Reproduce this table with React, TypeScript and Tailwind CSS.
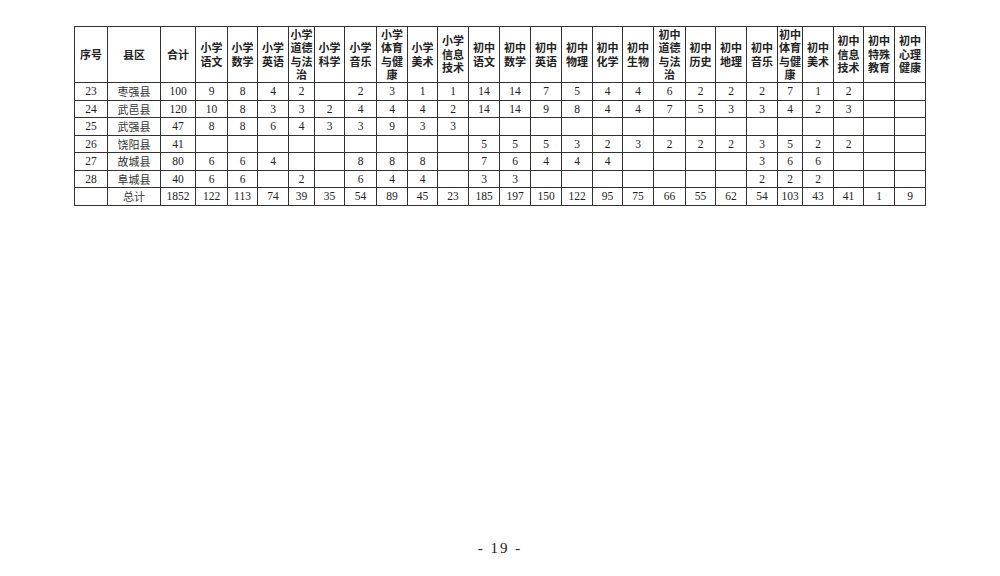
import React from 'react';

const widths = [33, 53, 35, 32, 30, 31, 26, 30, 32, 31, 30, 31, 31, 31, 31, 31, 30, 31, 32, 30, 31, 31, 25, 31, 30, 31, 31];

const headers: string[][] = [
  ['序号'],
  ['县区'],
  ['合计'],
  ['小学', '语文'],
  ['小学', '数学'],
  ['小学', '英语'],
  ['小学', '道德', '与法', '治'],
  ['小学', '科学'],
  ['小学', '音乐'],
  ['小学', '体育', '与健', '康'],
  ['小学', '美术'],
  ['小学', '信息', '技术'],
  ['初中', '语文'],
  ['初中', '数学'],
  ['初中', '英语'],
  ['初中', '物理'],
  ['初中', '化学'],
  ['初中', '生物'],
  ['初中', '道德', '与法', '治'],
  ['初中', '历史'],
  ['初中', '地理'],
  ['初中', '音乐'],
  ['初中', '体育', '与健', '康'],
  ['初中', '美术'],
  ['初中', '信息', '技术'],
  ['初中', '特殊', '教育'],
  ['初中', '心理', '健康'],
];

const rows: string[][] = [
  ['23', '枣强县', '100', '9', '8', '4', '2', '', '2', '3', '1', '1', '14', '14', '7', '5', '4', '4', '6', '2', '2', '2', '7', '1', '2', '', ''],
  ['24', '武邑县', '120', '10', '8', '3', '3', '2', '4', '4', '4', '2', '14', '14', '9', '8', '4', '4', '7', '5', '3', '3', '4', '2', '3', '', ''],
  ['25', '武强县', '47', '8', '8', '6', '4', '3', '3', '9', '3', '3', '', '', '', '', '', '', '', '', '', '', '', '', '', '', ''],
  ['26', '饶阳县', '41', '', '', '', '', '', '', '', '', '', '5', '5', '5', '3', '2', '3', '2', '2', '2', '3', '5', '2', '2', '', ''],
  ['27', '故城县', '80', '6', '6', '4', '', '', '8', '8', '8', '', '7', '6', '4', '4', '4', '', '', '', '', '3', '6', '6', '', '', ''],
  ['28', '阜城县', '40', '6', '6', '', '2', '', '6', '4', '4', '', '3', '3', '', '', '', '', '', '', '', '2', '2', '2', '', '', ''],
  ['', '总计', '1852', '122', '113', '74', '39', '35', '54', '89', '45', '23', '185', '197', '150', '122', '95', '75', '66', '55', '62', '54', '103', '43', '41', '1', '9'],
];

export default function App() {
  return (
    <div className="w-[1000px] h-[576px] bg-white flex flex-col items-start pt-[26px] pl-[74px] text-[#222] font-['Liberation_Serif','Noto_Sans_CJK_SC',serif]">
      <table className="table-fixed border-collapse border-[1.5px] border-[#222] w-[852px]">
        <colgroup>
          {widths.map((w, i) => (
            <col key={i} style={{ width: w }} />
          ))}
        </colgroup>
        <thead>
          <tr className="h-[56px]">
            {headers.map((lines, i) => (
              <th
                key={i}
                className="border border-[#333] p-0 align-middle text-center font-bold text-[11px] leading-[13.5px] font-['Noto_Sans_CJK_SC',sans-serif]"
              >
                {lines.map((l, j) => (
                  <div key={j} className="h-[13.5px]">{l}</div>
                ))}
              </th>
            ))}
          </tr>
        </thead>
        <tbody>
          {rows.map((r, i) => (
            <tr key={i} className="h-[17.5px]">
              {r.map((c, j) => (
                <td
                  key={j}
                  className={`border border-[#333] p-0 text-center align-middle leading-[16px] ${
                    j === 1 ? "text-[11px] font-['Noto_Sans_CJK_SC',sans-serif] text-[#333]" : 'text-[11.5px]'
                  }`}
                >
                  {c}
                </td>
              ))}
            </tr>
          ))}
        </tbody>
      </table>
      <div className="w-[852px] flex justify-center mt-[332px] text-[15px] leading-[20px] font-['Liberation_Serif',serif]">
        <span className="tracking-[2px]">- 19 -</span>
      </div>
    </div>
  );
}
